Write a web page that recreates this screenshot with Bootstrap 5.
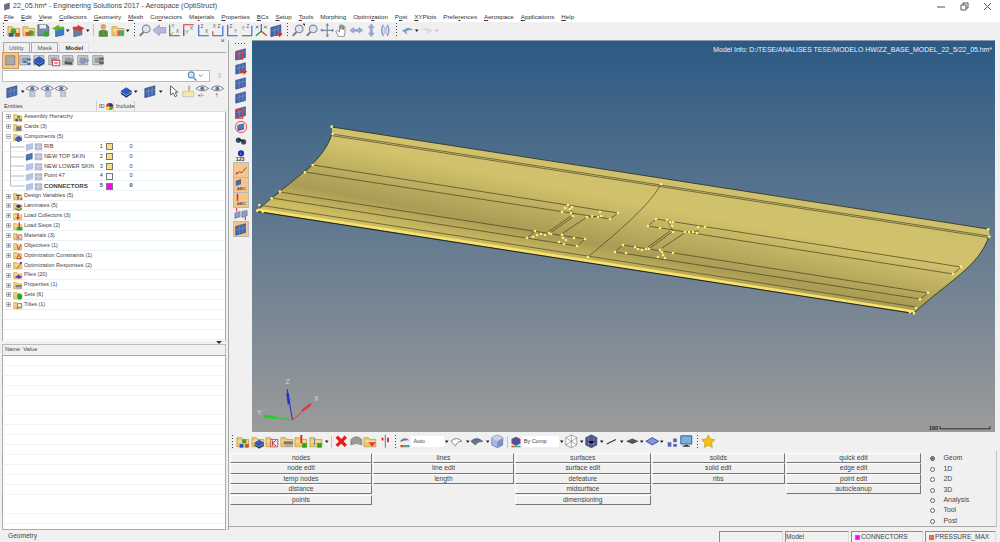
<!DOCTYPE html>
<html lang="en">
<head>
<meta charset="utf-8">
<title>22_05.hm* - Engineering Solutions 2017 - Aerospace (OptiStruct)</title>
<link href="https://cdn.jsdelivr.net/npm/bootstrap@5.3.0/dist/css/bootstrap.min.css" rel="stylesheet">
<style>
html,body{height:542px;overflow:hidden;background:#f0f0f0}
body{font-family:"Liberation Sans",Arial,sans-serif;font-size:6px;line-height:1;color:#444}
.app{height:542px;width:1000px}
.titlebar{height:12px;background:#fff;color:#444;font-size:7.05px;padding-left:3px}
.titlebar svg.doc{width:9px;height:9px;margin-right:1px}
.winbtns{margin-left:auto;gap:12px;padding-right:7px}
.winbtns svg{width:11px;height:9px}
.menubar{height:10px;background:#fff;padding-left:4px;gap:6.9px;font-size:6.25px;color:#333}
.toolbar{height:18px;background:#f0f0f0;padding-bottom:2px}
.ib{width:14.6px;height:14.6px;flex:none}
.ib12{width:12px;height:12px;flex:none}
.car{width:5.5px;height:5px;flex:none}
.grip{width:7px;height:14px;flex:none}
.sep{width:1px;height:12px;background:#c4c4c4;margin:0 2px;flex:none}
.mainrow{height:490px}
.leftpanel{width:227px;flex:none;padding:0 1px 0 2px}
.tabbar{height:13px;padding-left:1px;border-bottom:1px solid #a9a9a9}
.tabbar .nav-link{height:10px;padding:0 5px;margin:0 1.5px 0 0;border:1px solid #a9a9a9;border-bottom:0;border-radius:0;color:#555;font-size:6.1px;background:#f0f0f0;line-height:10px}
.tabbar .nav-link.active{font-weight:700;color:#333;background:#f0f0f0}
.closex{margin-left:auto;font-size:8px;margin-top:-3px;color:#555;padding-right:1px}
.iconrow{height:15px;padding-left:1px}
.iconrow .pick{background:#f7c489;outline:1px solid #c89a68}
.searchrow{height:13px;margin-top:1px}
.searchbox{width:208px;height:12px;padding:0;border:1px solid #bbb;border-radius:0;background:#fff;font-size:6px}
.searchrow .glass{margin-left:-24px}
.secondrow{height:17px;margin-top:1px;padding-left:3px}
.gapa{width:50px;flex:none}
.gapb{width:4px;flex:none}
.gapc{width:3px;flex:none}
.entityhead{height:11px;margin-top:1px;background:#f0f0f0;color:#444;font-size:5.7px;border-bottom:1px solid #ddd}
.hcell{height:11px;padding-left:2px;border-right:1px solid #d0d0d0;display:flex;align-items:center;flex:none}
.hc-a{width:95px}.hc-b{width:17px}.hc-c{width:21px}
.treewrap{height:229px;overflow:hidden;border-left:1px solid #aaa;border-right:1px solid #aaa;background:repeating-linear-gradient(#fff 0 9px,#e9f3f7 9px 9.9px)}
.treewrap .list-group-item{height:9.9px;padding:0;border:0;background:transparent;color:#444;font-size:5.5px;display:flex;align-items:center;border-radius:0}
.twist{width:5px;height:5px;margin:0 2px 0 3px;flex:none}
.ti{width:10px;height:10px;flex:none;margin-right:0}
.lab{margin-left:1px}
.indent{width:22px;height:10px;flex:none}
.pi{width:9px;height:9px;flex:none;margin-right:0}
.cname{width:50px;flex:none;margin-left:1px;white-space:nowrap;overflow:hidden;font-size:5.7px}
.strong-row .cname{font-size:6.2px}
.cid{width:9px;text-align:right;flex:none;font-size:5.7px}
.sw{width:7px;height:7px;margin-left:2.5px;border:1px solid #777;flex:none}
.sw-y{background:#f7de82}.sw-w{background:#f6f6f6}.sw-m{background:#f0f}
.cinc{margin-left:17px;flex:none;font-size:5.7px}
.strong-row{font-weight:700;color:#333}
.splitter{height:3px;position:relative}
.splitter i{position:absolute;right:4px;top:0;border:3px solid transparent;border-top:3px solid #333;border-bottom:0}
.namehead{height:11px;background:#f0f0f0;border:1px solid #bbb;border-bottom:0;padding-left:2px;color:#444;font-size:5.7px;gap:3px}
.proppane{height:175px;border:1px solid #aaa;background:repeating-linear-gradient(#fff 0 9px,#edf5f8 9px 9.9px)}
.rightcol{border-left:1px solid #a8a8a8;margin-left:1px;min-width:0}
.upper{height:392px}
.vtools{width:23px;flex:none;padding-top:1px;gap:.6px}
.vtools .act{background:#f7c489;outline:1px solid #b9b9b9}
.vtools .ib{width:14px;height:14px}
.vtools .topgrip{width:14px;height:5px}
.canvas3d{flex:1;position:relative;background:linear-gradient(#2c5a84 0%,#9b9b9b 100%);border-top:1px solid #8a9aa8}
.canvas3d svg{display:block;width:100%;height:100%}
.canvas3d text{font-family:"Liberation Sans",Arial,sans-serif}
.modelinfo{position:absolute;right:3px;top:6px;color:#eef;font-size:6.9px;white-space:nowrap}
.rstrip{width:5px;flex:none;background:#f0f0f0}
.lowertools{height:19px;padding-left:0;background:#f0f0f0}
.combo{height:11px;background:#fff;font-size:5.6px;color:#444;display:flex;align-items:center;padding-left:2px;flex:none}
.combo-a{width:33px}.combo-b{width:37px}
.pagewrap{height:76px;border-bottom:1px solid #a8a8a8;border-right:1px solid #c4c4c4;margin-right:3px;padding-left:1px}
.pagegrid{display:grid;grid-template-columns:143px 142px 136.5px 134.5px 136px;width:692px;margin-top:2px;grid-auto-flow:column;grid-template-rows:repeat(5,10.4px)}
.pb.btn{padding:0;height:10.2px;width:calc(100% - 1px);border:0;border-top:1px solid #fff;border-left:1px solid #fff;border-right:1px solid #777;border-bottom:1px solid #777;border-radius:0;background:#f0f0f0;color:#444;font-size:6.7px;line-height:8px;font-family:inherit;display:block}
.radios{padding-left:8px;padding-top:2.5px}
.radioline{height:10.45px;display:flex;align-items:center;font-size:6.9px;color:#444}
.radioline .form-check-input{width:5px;height:5px;margin:0 8.500px 0 0;border:1px solid #666;border-radius:50%;background-image:none;background-color:#fff;flex:none}
.radioline .form-check-input:checked{background:#222;box-shadow:inset 0 0 0 .5px #fff}
.statusbar{height:12px;background:#f0f0f0;font-size:6.6px;color:#444;padding-right:2px}
.stcell{height:11px;border:1px solid #8c8c8c;border-bottom:0;border-right-color:#ddd;display:flex;align-items:center;padding-left:0;flex:none;margin-right:2px;white-space:nowrap;margin-top:1px}
.st-a,.st-b{width:64px}.st-c{width:72px}.st-d{width:71px}
.ssw{width:5px;height:5px;margin:0 1px 0 3px;flex:none;border:1px solid #888}
.ssw-m{background:#f0f}.ssw-o{background:#f07030}
</style>
</head>
<body>
<svg width="0" height="0" class="d-none" aria-hidden="true">
<defs>
<symbol id="fold" viewBox="0 0 16 16"><path fill="#efc76c" stroke="#b58f3b" stroke-width=".7" d="M1 4h5l1.5 2H14v8H1z"/><path fill="#f9e09a" d="M2 7h11v2H2z"/></symbol>
<symbol id="plate" viewBox="0 0 16 16"><path fill="#4669ad" stroke="#2b3f78" stroke-width=".7" d="M2 5l11-3v10L2 15z"/><path stroke="#8fa4d4" stroke-width=".5" fill="none" d="M6 4v10M10 3v10M2 9l11-3"/></symbol>
<symbol id="platepale" viewBox="0 0 16 16"><path fill="#b4c6e6" stroke="#8ea5cd" stroke-width=".6" d="M2 5l12-3v10L2 15z"/></symbol>
<symbol id="gridpale" viewBox="0 0 16 16"><path fill="#b9bfd0" stroke="#8d93a8" stroke-width=".8" d="M2 3h12v11H2z"/><path stroke="#eef" stroke-width=".7" d="M8 3v11M2 8h12"/></symbol>
<symbol id="diamond" viewBox="0 0 16 16"><path fill="#2c59c7" stroke="#163a8a" stroke-width=".6" d="M8 4l6 4-6 4-6-4z"/><path fill="#163a8a" d="M2 9l6 4 6-4v2l-6 4-6-4z"/></symbol>
<symbol id="eye" viewBox="0 0 16 16"><path fill="#eef2f6" stroke="#667" stroke-width=".9" d="M1 5q7-6 14 0-7 5-14 0z"/><circle cx="8" cy="5" r="2.2" fill="#5a7ba8"/></symbol>
<symbol id="mag" viewBox="0 0 16 16"><circle cx="9" cy="6.5" r="4.2" fill="#dfe4ec" stroke="#858a96" stroke-width="1.2"/><path stroke="#777" stroke-width="2" d="M6 10l-4 4"/></symbol>
<symbol id="caret" viewBox="0 0 6 5"><path fill="#222" d="M1 1.5h4L3 4z"/></symbol>
<symbol id="caretg" viewBox="0 0 6 5"><path fill="#bbb" d="M1 1.5h4L3 4z"/></symbol>
<symbol id="gripv" viewBox="0 0 7 14"><path stroke="#444" stroke-dasharray="1 2" d="M3.5 0v14"/></symbol>
<symbol id="cube" viewBox="0 0 16 16"><path fill="#aab8e0" stroke="#5f6f9e" stroke-width=".8" d="M8 1l6 3v8l-6 3-6-3V4z"/><path fill="#7f90c7" d="M8 8l6-4v8l-6 3z"/><path fill="#c8d2ec" d="M8 1l6 3-6 4-6-4z"/></symbol>
<symbol id="box" viewBox="0 0 16 16"><rect x="2" y="3" width="11" height="10" fill="#cdcfd4" stroke="#888" stroke-width=".8"/><path fill="#989ca8" d="M4 5h7v6H4z"/></symbol>
<symbol id="plus" viewBox="0 0 5 5"><path fill="#fff" stroke="#888" stroke-width=".6" d="M.5.500h4v4h-4z"/><path stroke="#555" stroke-width=".6" d="M1 2.500h3M2.500 1v3"/></symbol>
<symbol id="minus" viewBox="0 0 5 5"><path fill="#fff" stroke="#888" stroke-width=".6" d="M.5.500h4v4h-4z"/><path stroke="#555" stroke-width=".6" d="M1 2.500h3"/></symbol>
<symbol id="branch" viewBox="0 0 22 10"><path stroke="#bbb" fill="none" d="M7.500 0v10M7.500 5h14"/></symbol>
<symbol id="branchend" viewBox="0 0 22 10"><path stroke="#bbb" fill="none" d="M7.500 0v5M7.500 5h14"/></symbol>
</defs>
</svg>
<div class="app d-flex flex-column">
  <div class="titlebar d-flex align-items-center">
    <svg class="doc" viewBox="0 0 16 16"><path fill="#6a6f86" d="M2 4l10-3v11L2 15z"/></svg>
    <span>22_05.hm* - Engineering Solutions 2017 - Aerospace (OptiStruct)</span>
    <div class="winbtns d-flex">
      <svg viewBox="0 0 11 9"><path stroke="#555" d="M1 5h8"/></svg>
      <svg viewBox="0 0 11 9"><path fill="none" stroke="#555" d="M2 3h5v5H2zM4 3V1h5v5H7"/></svg>
      <svg viewBox="0 0 11 9"><path stroke="#555" fill="none" d="M2 1l7 7M9 1L2 8"/></svg>
    </div>
  </div>
  <div class="menubar d-flex align-items-center">
    <span><u>F</u>ile</span><span><u>E</u>dit</span><span><u>V</u>iew</span><span><u>C</u>ollectors</span><span><u>G</u>eometry</span><span><u>M</u>esh</span><span>Co<u>n</u>nectors</span><span>Ma<u>t</u>erials</span><span><u>P</u>roperties</span><span><u>B</u>Cs</span><span><u>S</u>etup</span><span><u>T</u>ools</span><span>Morphing</span><span>Optimi<u>z</u>ation</span><span>P<u>o</u>st</span><span><u>X</u>YPlots</span><span>Prefe<u>r</u>ences</span><span><u>A</u>erospace</span><span><u>A</u>pplications</span><span><u>H</u>elp</span>
  </div>
  <div class="toolbar d-flex align-items-center">
    <svg class="grip"><use href="#gripv"/></svg>
    <svg class="ib" viewBox="0 0 16 16"><use href="#fold"/><circle cx="7" cy="9" r="3" fill="#3a3"/><path fill="#25c" d="M2 11h5v4H2z"/><path fill="#c52" d="M9 11h5v4H9z"/></svg>
    <svg class="ib" viewBox="0 0 16 16"><use href="#fold"/><circle cx="10" cy="11" r="3" fill="#4a3"/><path fill="#c52" d="M4 10h5v4H4z"/></svg>
    <svg class="ib" viewBox="0 0 16 16"><path fill="#7a8ea8" stroke="#445" stroke-width=".7" d="M2 2h10l2 2v10H2z"/><path fill="#eef" d="M4 2h7v4H4z"/><circle cx="11" cy="12" r="3" fill="#3a3"/></svg>
    <svg class="ib" viewBox="0 0 16 16"><path fill="#3d7dc9" stroke="#234" stroke-width=".5" d="M5 7l9-2v8l-9 2z"/><path fill="#5cb62c" d="M1 6l8-4v2h5v3H8v2z"/></svg>
    <svg class="car"><use href="#caret"/></svg>
    <svg class="ib" viewBox="0 0 16 16"><path fill="#6a7ea8" stroke="#234" stroke-width=".5" d="M3 7l9-2v8l-9 2z"/><path fill="#d8352a" d="M15 6L7 2v2H2v3h6v2z"/></svg>
    <svg class="car"><use href="#caret"/></svg>
    <span class="sep"></span>
    <svg class="ib" viewBox="0 0 16 16"><circle cx="8" cy="4" r="3" fill="#d9a26a"/><path fill="#3f9a3a" d="M3 15V9q5-3 10 0v6z"/><path fill="#a66" d="M7 8h2v7H7z"/></svg>
    <svg class="ib" viewBox="0 0 16 16"><use href="#fold"/><path fill="#f52" d="M7 8h3v6H7z"/><path fill="#39d" d="M10 8h2v6h-2z"/><path fill="#3b3" d="M12 8h2v6h-2z"/></svg>
    <svg class="car"><use href="#caret"/></svg>
    <svg class="grip"><use href="#gripv"/></svg>
    <svg class="ib" viewBox="0 0 16 16"><use href="#mag"/></svg>
    <svg class="ib" viewBox="0 0 16 16"><path fill="#b9b6e0" stroke="#8f8cc0" stroke-width=".7" d="M1 8l7-6v3h7v6H8v3z"/></svg>
    <svg class="ib" viewBox="0 0 16 16"><path fill="none" stroke="#1c8a2c" stroke-width="1.2" d="M3 2v12h11"/><path fill="none" stroke="#d33" stroke-width=".8" d="M3 14l4-4"/><text x="5" y="6" font-size="5" fill="#555">Y</text><text x="10" y="11" font-size="5" fill="#555">X</text></svg>
    <svg class="ib" viewBox="0 0 16 16"><path fill="none" stroke="#d33" stroke-width="1.2" d="M14 2H3v12"/><path stroke="#1c8a2c" stroke-width="1.2" d="M3 8v6"/><text x="5" y="12" font-size="5" fill="#555">Y</text><text x="10" y="8" font-size="5" fill="#555">X</text></svg>
    <svg class="ib" viewBox="0 0 16 16"><path fill="none" stroke="#2f5ed8" stroke-width="1.2" d="M3 2v12h11"/><text x="5" y="6" font-size="5" fill="#555">Z</text><text x="10" y="11" font-size="5" fill="#555">X</text></svg>
    <svg class="ib" viewBox="0 0 16 16"><path fill="none" stroke="#2f5ed8" stroke-width="1.2" d="M2 14h11V3"/><path stroke="#d33" stroke-width="1.2" d="M2 14V9"/><text x="7" y="6" font-size="5" fill="#555">Z</text><text x="2" y="6" font-size="5" fill="#555">X</text></svg>
    <svg class="ib" viewBox="0 0 16 16"><path fill="none" stroke="#2f5ed8" stroke-width="1.2" d="M3 2v12h11"/><text x="5" y="6" font-size="5" fill="#555">Z</text><text x="10" y="11" font-size="5" fill="#555">Y</text></svg>
    <svg class="ib" viewBox="0 0 16 16"><path fill="none" stroke="#1c8a2c" stroke-width="1.2" d="M2 14h11"/><path stroke="#2f5ed8" stroke-width="1.2" d="M13 14V3"/><text x="7" y="6" font-size="5" fill="#555">Z</text><text x="2" y="8" font-size="5" fill="#555">Y</text></svg>
    <svg class="ib" viewBox="0 0 16 16"><path stroke="#2f5ed8" stroke-width="1.3" d="M8 9V1"/><path stroke="#1c8a2c" stroke-width="1.3" d="M8 9l-6 5"/><path stroke="#d33" stroke-width="1.3" d="M8 9l6 5"/><path stroke="#333" stroke-width=".7" d="M2 3l3 3M5 3L2 6M11 3l3 3M14 3l-3 3"/></svg>
    <svg class="ib" viewBox="0 0 16 16"><use href="#plate"/><path fill="#d8352a" d="M15 12l-4-3v2H7v3h4v2z"/></svg>
    <svg class="grip"><use href="#gripv"/></svg>
    <svg class="ib" viewBox="0 0 16 16"><use href="#mag"/><path stroke="#333" stroke-width=".8" d="M13 1h2v2"/></svg>
    <svg class="ib" viewBox="0 0 16 16"><use href="#mag"/></svg>
    <svg class="ib" viewBox="0 0 16 16"><path stroke="#7b8aa8" stroke-width="1.3" d="M8 2v12M2 8h12"/><path fill="#7b8aa8" d="M8 0l2 3H6zM8 16l2-3H6zM0 8l3-2v4zM16 8l-3-2v4z"/></svg>
    <svg class="ib" viewBox="0 0 16 16"><path fill="#fff" stroke="#777" stroke-width=".9" d="M5 15l-3-6 2-1 2 2V3h1.500v4V2H9v5V3h1.500v4.500V4H12v7l-1 4z"/></svg>
    <svg class="ib" viewBox="0 0 16 16"><path fill="#9ab0dc" stroke="#7488b8" stroke-width=".6" d="M1 8l4-3v2h6V5l4 3-4 3V9H5v2z"/></svg>
    <svg class="ib" viewBox="0 0 16 16"><path fill="#9ab0dc" stroke="#7488b8" stroke-width=".6" d="M8 1l3 4H9v6h2l-3 4-3-4h2V5H5z"/></svg>
    <svg class="ib" viewBox="0 0 16 16"><path fill="none" stroke="#7e94c4" stroke-width="1.6" d="M6 2Q2 8 6 14M10 2q4 6 0 12"/><path fill="#bcc8e4" d="M6 4h4v8H6z"/></svg>
    <svg class="grip"><use href="#gripv"/></svg>
    <svg class="ib" viewBox="0 0 16 16"><path fill="#7e9cc8" d="M2 8l3-1q4-4 10 1-4-1-8 1l1 4z"/></svg>
    <svg class="car"><use href="#caret"/></svg>
    <svg class="ib" viewBox="0 0 16 16"><path fill="#d8d8d8" d="M14 8l-3-1Q7 3 1 8q4-1 8 1l-1 4z"/></svg>
    <svg class="car"><use href="#caretg"/></svg>
  </div>
  <div class="mainrow d-flex">
    <div class="leftpanel d-flex flex-column">
      <div class="tabbar d-flex align-items-end">
        <ul class="nav nav-tabs border-0 flex-nowrap">
          <li class="nav-item"><a class="nav-link" href="#">Utility</a></li>
          <li class="nav-item"><a class="nav-link" href="#">Mask</a></li>
          <li class="nav-item"><a class="nav-link active" href="#">Model</a></li>
        </ul>
        <span class="closex align-self-start">×</span>
      </div>
      <div class="iconrow d-flex align-items-center">
        <svg class="ib pick" viewBox="0 0 16 16"><path fill="#aaa" stroke="#666" stroke-width=".6" d="M3 3h10v10H3z"/></svg>
        <svg class="ib" viewBox="0 0 16 16"><use href="#box"/><path fill="#2f6fd0" d="M6 9h3v2H6zM10 6h4v2h-4zM10 11h4v2h-4z"/></svg>
        <svg class="ib" viewBox="0 0 16 16"><use href="#box"/><use href="#diamond"/></svg>
        <svg class="ib" viewBox="0 0 16 16"><use href="#box"/><path fill="#f4f4f4" stroke="#c33" d="M6 8h8v6H6z"/><path stroke="#c33" d="M8 11h4"/></svg>
        <svg class="ib" viewBox="0 0 16 16"><use href="#box"/><path fill="#555" d="M4 9l8 1v3l-8-1z"/><path fill="#999" d="M7 6h7v4H7z"/></svg>
        <svg class="ib" viewBox="0 0 16 16"><use href="#box"/><path fill="#8c94c0" d="M3 10l8-4 4 2-8 5z"/></svg>
        <svg class="ib" viewBox="0 0 16 16"><use href="#box"/><path fill="#666" d="M9 5h5v3H9zM9 9h5v3H9z"/></svg>
      </div>
      <div class="searchrow d-flex align-items-center">
        <input class="form-control searchbox" type="text" aria-label="Search">
        <svg class="ib12 glass" viewBox="0 0 16 16"><circle cx="7" cy="6.500" r="4" fill="#cfe6fa" stroke="#5a8fc0" stroke-width="1.400"/><path stroke="#888" stroke-width="2" d="M10 10l4 4"/></svg>
        <svg class="car" viewBox="0 0 6 5"><path fill="none" stroke="#555" stroke-width=".8" d="M1 1.500l2 2 2-2"/></svg>
        <svg class="car ms-auto me-1" viewBox="0 0 6 8"><path fill="none" stroke="#555" stroke-width=".8" d="M1 1l2 2 2-2M1 5l2 2 2-2"/></svg>
      </div>
      <div class="secondrow d-flex align-items-center">
        <svg class="ib" viewBox="0 0 16 16"><use href="#plate"/></svg>
        <svg class="car"><use href="#caret"/></svg>
        <svg class="ib" viewBox="0 0 16 16"><use href="#eye"/><use href="#gridpale" x="4" y="7" width="8" height="8"/></svg>
        <svg class="ib" viewBox="0 0 16 16"><use href="#eye"/><use href="#gridpale" x="5" y="7" width="8" height="8"/></svg>
        <svg class="ib" viewBox="0 0 16 16"><use href="#eye"/><use href="#gridpale" x="6" y="7" width="8" height="8"/></svg>
        <span class="gapa"></span>
        <svg class="ib" viewBox="0 0 16 16"><use href="#diamond"/></svg>
        <svg class="car"><use href="#caret"/></svg>
        <span class="gapb"></span>
        <svg class="ib" viewBox="0 0 16 16"><use href="#plate"/></svg>
        <svg class="car"><use href="#caret"/></svg>
        <span class="gapc"></span>
        <svg class="ib" viewBox="0 0 16 16"><path fill="#fff" stroke="#555" stroke-width="1" d="M5 2v10l3-2 2 4 2-1-2-4h3z"/></svg>
        <svg class="ib" viewBox="0 0 16 16"><path fill="#f4ec9a" stroke="#9bc" stroke-width=".7" d="M2 8h12v6H2z"/><path fill="#e88" d="M8 2h2v5H8z"/></svg>
        <svg class="ib" viewBox="0 0 16 16"><use href="#eye"/><text x="3" y="14" font-size="5" fill="#333">+/−</text></svg>
        <svg class="ib" viewBox="0 0 16 16"><use href="#eye"/><text x="6" y="14" font-size="5" fill="#333">†</text></svg>
      </div>
      <div class="entityhead d-flex">
        <div class="hcell hc-a">Entities</div>
        <div class="hcell hc-b">ID<svg class="ms-auto" width="7" height="7" viewBox="0 0 8 8"><circle cx="4" cy="4" r="4" fill="#e22"/><path fill="#22d" d="M4 4V0a4 4 0 0 1 4 4z"/><path fill="#2b2" d="M4 4h4a4 4 0 0 1-4 4z"/><path fill="#ee2" d="M4 4v4a4 4 0 0 1-4-4z"/></svg></div>
        <div class="hcell hc-c">Include</div>
      </div>
      <div class="treewrap">
        <ul class="list-group list-group-flush">
          <li class="list-group-item"><svg class="twist"><use href="#plus"/></svg><svg class="ti" viewBox="0 0 16 16"><use href="#fold"/><circle cx="9" cy="8" r="2.500" fill="#3a3"/><path fill="#25c" d="M4 11h4v4H4z"/><path fill="#c52" d="M10 11h4v4h-4z"/></svg><span class="lab">Assembly Hierarchy</span></li>
          <li class="list-group-item"><svg class="twist"><use href="#plus"/></svg><svg class="ti" viewBox="0 0 16 16"><use href="#fold"/><path fill="#777" d="M5 7h8v7H5z"/></svg><span class="lab">Cards (3)</span></li>
          <li class="list-group-item"><svg class="twist"><use href="#minus"/></svg><svg class="ti" viewBox="0 0 16 16"><use href="#fold"/><use href="#diamond" x="2" y="3" width="14" height="14"/></svg><span class="lab">Components (5)</span></li>
          <li class="list-group-item"><svg class="indent"><use href="#branch"/></svg><svg class="pi" viewBox="0 0 16 16"><use href="#platepale"/></svg><svg class="pi" viewBox="0 0 16 16"><use href="#gridpale"/></svg><span class="cname">RIB</span><span class="cid">1</span><span class="sw sw-y"></span><span class="cinc">0</span></li>
          <li class="list-group-item"><svg class="indent"><use href="#branch"/></svg><svg class="pi" viewBox="0 0 16 16"><use href="#plate"/></svg><svg class="pi" viewBox="0 0 16 16"><use href="#gridpale"/></svg><span class="cname">NEW TOP SKIN</span><span class="cid">2</span><span class="sw sw-y"></span><span class="cinc">0</span></li>
          <li class="list-group-item"><svg class="indent"><use href="#branch"/></svg><svg class="pi" viewBox="0 0 16 16"><use href="#platepale"/></svg><svg class="pi" viewBox="0 0 16 16"><use href="#gridpale"/></svg><span class="cname">NEW LOWER SKIN</span><span class="cid">3</span><span class="sw sw-y"></span><span class="cinc">0</span></li>
          <li class="list-group-item"><svg class="indent"><use href="#branch"/></svg><svg class="pi" viewBox="0 0 16 16"><use href="#platepale"/></svg><svg class="pi" viewBox="0 0 16 16"><use href="#gridpale"/></svg><span class="cname">Point 47</span><span class="cid">4</span><span class="sw sw-w"></span><span class="cinc">0</span></li>
          <li class="list-group-item strong-row"><svg class="indent"><use href="#branchend"/></svg><svg class="pi" viewBox="0 0 16 16"><use href="#platepale"/></svg><svg class="pi" viewBox="0 0 16 16"><use href="#gridpale"/></svg><span class="cname">CONNECTORS</span><span class="cid">5</span><span class="sw sw-m"></span><span class="cinc">0</span></li>
          <li class="list-group-item"><svg class="twist"><use href="#plus"/></svg><svg class="ti" viewBox="0 0 16 16"><use href="#fold"/><path stroke="#23c" stroke-width="1.600" d="M5 7h7M8 7v7"/><path fill="#d33" d="M12 11h3v3h-3z"/></svg><span class="lab">Design Variables (5)</span></li>
          <li class="list-group-item"><svg class="twist"><use href="#plus"/></svg><svg class="ti" viewBox="0 0 16 16"><use href="#fold"/><path fill="#3f3a6a" d="M4 8l5-3 5 3-5 4z"/><path fill="#383" d="M4 11l5 3 5-3v2l-5 3-5-3z"/></svg><span class="lab">Laminates (5)</span></li>
          <li class="list-group-item"><svg class="twist"><use href="#plus"/></svg><svg class="ti" viewBox="0 0 16 16"><use href="#fold"/><path stroke="#d22" stroke-width="2" d="M8 3v9"/><path fill="#d22" d="M5 10h6l-3 4z"/></svg><span class="lab">Load Collectors (3)</span></li>
          <li class="list-group-item"><svg class="twist"><use href="#plus"/></svg><svg class="ti" viewBox="0 0 16 16"><use href="#fold"/><path fill="#2a2" d="M6 10h9v5H6z"/><path stroke="#d22" stroke-width="2" d="M10 2v9"/></svg><span class="lab">Load Steps (2)</span></li>
          <li class="list-group-item"><svg class="twist"><use href="#plus"/></svg><svg class="ti" viewBox="0 0 16 16"><use href="#fold"/><path fill="#eee" stroke="#a44" stroke-width=".8" d="M6 6h8v8H6z"/><path stroke="#a22" d="M8 7v6M8 10l4-3M8 10l4 3"/></svg><span class="lab">Materials (3)</span></li>
          <li class="list-group-item"><svg class="twist"><use href="#plus"/></svg><svg class="ti" viewBox="0 0 16 16"><use href="#fold"/><path fill="none" stroke="#c22" stroke-width="1.300" d="M6 6l3 8 4-9"/></svg><span class="lab">Objectives (1)</span></li>
          <li class="list-group-item"><svg class="twist"><use href="#plus"/></svg><svg class="ti" viewBox="0 0 16 16"><use href="#fold"/><path fill="none" stroke="#c22" stroke-width="1.200" d="M6 14l3-8 4 8z"/></svg><span class="lab">Optimization Constraints (1)</span></li>
          <li class="list-group-item"><svg class="twist"><use href="#plus"/></svg><svg class="ti" viewBox="0 0 16 16"><use href="#fold"/><path stroke="#c22" stroke-width="1.200" d="M6 14l7-9"/><path fill="#23a" d="M11 3h3v3h-3z"/></svg><span class="lab">Optimization Responses (2)</span></li>
          <li class="list-group-item"><svg class="twist"><use href="#plus"/></svg><svg class="ti" viewBox="0 0 16 16"><use href="#fold"/><path fill="#6a3fb0" d="M3 11l6-4 6 4-6 3z"/></svg><span class="lab">Plies (20)</span></li>
          <li class="list-group-item"><svg class="twist"><use href="#plus"/></svg><svg class="ti" viewBox="0 0 16 16"><use href="#fold"/><path fill="#777" d="M4 8h10v3H4z"/><path fill="#aaa" d="M5 11h9v3H5z"/></svg><span class="lab">Properties (1)</span></li>
          <li class="list-group-item"><svg class="twist"><use href="#plus"/></svg><svg class="ti" viewBox="0 0 16 16"><use href="#fold"/><path fill="#1ea82a" d="M6 8l4-3 5 4-2 6H8z"/></svg><span class="lab">Sets (6)</span></li>
          <li class="list-group-item"><svg class="twist"><use href="#plus"/></svg><svg class="ti" viewBox="0 0 16 16"><use href="#fold"/><path fill="#fff" stroke="#333" stroke-width=".9" d="M7 6h7v5H9l-2 3z"/></svg><span class="lab">Titles (1)</span></li>
        </ul>
      </div>
      <div class="splitter"><i></i></div>
      <div class="namehead d-flex align-items-center"><span>Name</span><span>Value</span></div>
      <div class="proppane"></div>
    </div>
    <div class="rightcol flex-fill d-flex flex-column">
      <div class="upper d-flex">
        <div class="vtools d-flex flex-column align-items-center">
          <svg class="topgrip" viewBox="0 0 14 5"><path stroke="#444" stroke-dasharray="1 2" d="M1 2.500h12"/></svg>
          <svg class="ib" viewBox="0 0 16 16"><use href="#plate"/><path fill="none" stroke="#e33" stroke-width="1.300" d="M2 6h8v8H2z"/></svg>
          <svg class="ib" viewBox="0 0 16 16"><use href="#plate"/><path fill="#d8352a" d="M15 12l-4-3v2H7v3h4v2z"/></svg>
          <svg class="ib" viewBox="0 0 16 16"><use href="#plate"/></svg>
          <svg class="ib" viewBox="0 0 16 16"><use href="#plate"/></svg>
          <svg class="ib" viewBox="0 0 16 16"><use href="#plate"/><path fill="none" stroke="#e33" stroke-width="1.300" d="M2 6h8v9H2z"/></svg>
          <svg class="ib" viewBox="0 0 16 16"><circle cx="8" cy="8" r="6.500" fill="#f3e4e4" stroke="#e44"/><use href="#plate" x="3" y="3" width="10" height="10"/></svg>
          <svg class="ib" viewBox="0 0 16 16"><circle cx="5" cy="7" r="3" fill="#35506e"/><circle cx="11" cy="9" r="3" fill="#35506e"/><path stroke="#222" stroke-width="2" d="M5 6l6 2"/></svg>
          <svg class="ib" viewBox="0 0 16 16"><circle cx="8" cy="5" r="3.500" fill="#1b2fb0"/><text x="7.200" y="7" font-size="5" fill="#fff">i</text><text x="2" y="14" font-size="6" font-weight="700" fill="#333">123</text></svg>
          <svg class="ib act" viewBox="0 0 16 16"><path fill="none" stroke="#445" stroke-width=".9" d="M2 13l4-3 3 1 5-6"/><path fill="#d33" d="M2 13l1-3 2 2z"/></svg>
          <svg class="ib act" viewBox="0 0 16 16"><path fill="#4a69ad" d="M2 3l6-2v6L2 9z"/><text x="3" y="14" font-size="5" font-weight="700" fill="#555">ABC</text></svg>
          <svg class="ib act" viewBox="0 0 16 16"><path stroke="#d22" stroke-width="1.600" d="M4 1v8"/><text x="3" y="14" font-size="5" font-weight="700" fill="#555">ABC</text></svg>
          <svg class="ib" viewBox="0 0 16 16"><path fill="#8ea0c8" stroke="#445" stroke-width=".5" d="M1 7l6-2v6l-6 2zM9 5l6-1v6l-6 2z"/><path stroke="#d22" stroke-width="1.200" d="M3 1v4M13 11v4"/></svg>
          <svg class="ib act" viewBox="0 0 16 16"><use href="#plate"/></svg>
        </div>
        <div class="canvas3d">
          <svg viewBox="252 41 743 391" preserveAspectRatio="none" role="img" aria-label="Geometry view">
            <defs>
              <linearGradient id="skin" gradientUnits="userSpaceOnUse" x1="640" y1="172" x2="620" y2="272">
                <stop offset="0" stop-color="#cfc06c"/><stop offset=".3" stop-color="#d2c26c"/><stop offset=".78" stop-color="#a99c54"/><stop offset="1" stop-color="#cdbc62"/>
              </linearGradient>
            </defs>
            <path fill="url(#skin)" d="M332 127L988 229Q990 232 989 236C979 267 947 282 914 313L257 211C290 180 322 165 332 134Z"/>
            <path fill="none" stroke="#2a2a20" stroke-width=".8" d="M332 127L988 229M989 236C979 267 947 282 914 313M257 211C290 180 322 165 332 134"/>
            <path stroke="#f7e26c" stroke-width="2.600" d="M258 209.500L914 311.500"/>
            <path stroke="#1a1a10" stroke-width=".9" d="M257 211.500L914 313.500"/>
            <path fill="none" stroke="#5c5430" stroke-width=".8" d="M259 205L916 307M332 134L989 236M332 135.600L989 237.600"/>
            <path fill="none" stroke="#4e4828" stroke-width=".75" d="M313 165L618 213M305 172L610 219M280 192L585 239M272 198L577 246M656 219L961 267M648 226L953 274M623 245L928 293M615 252L920 299M313 165L305 172M280 192L272 198M618 213L610 219M585 239L577 246M656 219L648 226M623 245L615 252M961 267L953 274M928 293L920 299"/>
            <path fill="none" stroke="#4e4828" stroke-width=".75" d="M661 184C650 205 620 230 588 257"/>
            <path fill="none" stroke="#4e4828" stroke-width=".75" d="M573 217L550 233M571 216L548 232M587 217L563 233M587 217L600 216M568 205L574 216M535 231L527 238M672 232L650 248M670 231L648 247M686 232L662 248M686 232L699 231M667 220L673 231"/>
            <path fill="none" stroke="#f8f07a" stroke-width="2.700" stroke-linecap="round" d="M331.700 126.700h0M332.700 134h0M312.700 165h0M305 172.300h0M280 191.700h0M271.700 198.300h0M259.300 205h0M257.300 210.700h0M262.700 211.700h0M988.300 229.300h0M989.300 236.700h0M961 266.700h0M953 274h0M928 292.700h0M920 299.300h0M916 308h0M910 312.300h0M914 313.300h0M661 184h0M588 257h0M568 205h0M565 208h0M570 209h0M572 207h0M562 212h0M571 213h0M573 216h0M600 212h0M601 216h0M618 213h0M610 219h0M598 217h0M592 216h0M587 217h0M535 231h0M527 238h0M533 237h0M537 235h0M541 234h0M545 235h0M549 233h0M551 234h0M562 235h0M559 242h0M563 238h0M566 240h0M564 244h0M574 238h0M585 239h0M577 246h0M656 219h0M648 226h0M667 220h0M670 222h0M673 222h0M672 226h0M673 232h0M660 228h0M705 227h0M698 227h0M697 233h0M693 232h0M689 232h0M685 232h0M623 245h0M615 252h0M626 253h0M635 247h0M638 249h0M642 250h0M646 249h0M649 249h0M660 250h0M658 257h0M663 255h0M665 258h0M662 252h0M673 253h0"/>
            <path stroke="#2333d0" stroke-width="1.100" d="M292.500 420L287 389"/><path stroke="#2333d0" stroke-width="2.600" d="M287.500 393L289 404"/>
            <path stroke="#1fd01f" stroke-width="1" d="M292.500 420L263 416"/><path stroke="#1fd01f" stroke-width="2.800" d="M264 416L275 417.500"/>
            <path stroke="#d84040" stroke-width="1" d="M292.500 420L311 404"/><path stroke="#d84040" stroke-width="2.800" d="M302 411L311 404"/>
            <text x="285.500" y="384" font-size="7" fill="#d8d8d8">Z</text><text x="257" y="415" font-size="7" fill="#d8d8d8">Y</text><text x="314" y="401" font-size="7" fill="#d8d8d8">X</text>
            <text x="929" y="430" font-size="5.500" font-weight="700" fill="#222">100</text>
            <path fill="none" stroke="#111" stroke-width=".8" d="M940 426v2.800h50V426"/>
          </svg>
          <span class="modelinfo">Model Info: D:/TESE/ANALISES TESE/MODELO HW/ZZ_BASE_MODEL_22_5/22_05.hm*</span>
        </div>
        <div class="rstrip"></div>
      </div>
      <div class="lowertools d-flex align-items-center">
        <svg class="grip"><use href="#gripv"/></svg>
        <svg class="ib" viewBox="0 0 16 16"><use href="#fold"/><circle cx="9" cy="8" r="2.500" fill="#3a3"/><path fill="#25c" d="M4 11h4v4H4z"/><path fill="#c52" d="M10 11h4v4h-4z"/></svg>
        <svg class="ib" viewBox="0 0 16 16"><use href="#fold"/><use href="#diamond" x="2" y="3" width="14" height="14"/></svg>
        <svg class="ib" viewBox="0 0 16 16"><use href="#fold"/><path fill="#eee" stroke="#a44" stroke-width=".8" d="M6 6h8v8H6z"/><path stroke="#a22" d="M8 7v6M8 10l4-3M8 10l4 3"/></svg>
        <svg class="ib" viewBox="0 0 16 16"><use href="#fold"/><path fill="#777" d="M4 8h10v3H4z"/><path fill="#aaa" d="M5 11h9v3H5z"/></svg>
        <svg class="ib" viewBox="0 0 16 16"><use href="#fold"/><path stroke="#d22" stroke-width="2" d="M8 1v9"/><path fill="#2a2" d="M9 10h5v5H9z"/></svg>
        <svg class="ib" viewBox="0 0 16 16"><use href="#fold"/><path fill="none" stroke="#38c" d="M6 12V5"/><path fill="#2a2" d="M9 10h5v5H9z"/></svg>
        <svg class="car"><use href="#caret"/></svg>
        <span class="sep"></span>
        <svg class="ib" viewBox="0 0 16 16"><path stroke="#e02020" stroke-width="3.600" d="M3 3l10 10M13 3L3 13"/></svg>
        <svg class="ib" viewBox="0 0 16 16"><path fill="#999" stroke="#666" stroke-width=".6" d="M2 6q6-6 12 0v6q-6-3-12 0z"/></svg>
        <svg class="ib" viewBox="0 0 16 16"><use href="#fold"/><path fill="#e33" d="M6 9l8 0-4 5z"/></svg>
        <svg class="ib" viewBox="0 0 16 16"><path stroke="#666" d="M8 1v14"/><path stroke="#d22" stroke-width="2" d="M11 4v5M5 4v3"/></svg>
        <svg class="grip"><use href="#gripv"/></svg>
        <svg class="ib12" viewBox="0 0 16 16"><path fill="#6a7a9a" d="M2 6q6-6 12 0-6-1-12 2z"/><path fill="#e33" d="M2 12h4v3H2z"/><path fill="#3b3" d="M6 12h4v3H6z"/><path fill="#39d" d="M10 12h4v3h-4z"/></svg>
        <div class="combo combo-a">Auto</div>
        <svg class="car"><use href="#caret"/></svg>
        <svg class="ib" viewBox="0 0 16 16"><path fill="#fff" stroke="#777" d="M1 8q6-6 12 0-5 0-7 5z"/></svg>
        <svg class="car"><use href="#caret"/></svg>
        <svg class="ib" viewBox="0 0 16 16"><path fill="#60748e" stroke="#334" stroke-width=".6" d="M1 8q6-6 13 0-6 0-8 4z"/></svg>
        <svg class="car"><use href="#caret"/></svg>
        <svg class="ib" viewBox="0 0 16 16"><use href="#cube"/></svg>
        <span class="sep"></span>
        <svg class="ib12" viewBox="0 0 16 16"><path fill="#5a4f8e" d="M8 1l6 3v6l-6 3-6-3V4z"/><path fill="#e33" d="M2 13h4v2H2z"/><path fill="#3b3" d="M6 13h4v2H6z"/><path fill="#39d" d="M10 13h4v2h-4z"/></svg>
        <div class="combo combo-b">By Comp</div>
        <svg class="car"><use href="#caret"/></svg>
        <svg class="ib" viewBox="0 0 16 16"><path fill="#fff" stroke="#777" stroke-width=".7" d="M8 1l6 3v8l-6 3-6-3V4zM8 1v14M2 4l12 8M14 4L2 12"/></svg>
        <svg class="car"><use href="#caret"/></svg>
        <svg class="ib" viewBox="0 0 16 16"><path fill="#4d5a96" stroke="#223" stroke-width=".7" d="M8 1l6 3v8l-6 3-6-3V4z"/><path stroke="#9aa6d8" stroke-width=".5" d="M5 3v11M11 3v11M2 8l6 3 6-3"/></svg>
        <svg class="car"><use href="#caret"/></svg>
        <svg class="ib" viewBox="0 0 16 16"><path stroke="#333" stroke-width="1.200" d="M3 11l10-5"/></svg>
        <svg class="car"><use href="#caret"/></svg>
        <svg class="ib" viewBox="0 0 16 16"><path fill="#555" d="M1 8l7-3 7 3-7 3z"/></svg>
        <svg class="car"><use href="#caret"/></svg>
        <svg class="ib" viewBox="0 0 16 16"><path fill="#8795d8" stroke="#2c4aa8" d="M1 8l7-4 7 4-7 4z"/></svg>
        <svg class="car"><use href="#caret"/></svg>
        <svg class="ib" viewBox="0 0 16 16"><path fill="#5a68b0" d="M3 9h4v5H3zM9 5h4v4H9zM9 11h4v3H9z"/></svg>
        <svg class="ib" viewBox="0 0 16 16"><path fill="#7ab0dc" stroke="#2b5a8a" d="M2 2h12v9H2z"/><path fill="#333" d="M6 12h4v1h2v1H4v-1h2z"/></svg>
        <svg class="grip"><use href="#gripv"/></svg>
        <svg class="ib" viewBox="0 0 16 16"><path fill="#f4c20d" stroke="#b88a10" stroke-width=".6" d="M8 1l2.200 4.600 5 .7-3.600 3.500.9 5L8 12.400l-4.500 2.400.9-5L.8 6.300l5-.7z"/></svg>
      </div>
      <div class="pagewrap d-flex">
        <div class="pagegrid">
          <button class="pb btn" type="button">nodes</button><button class="pb btn" type="button">node edit</button><button class="pb btn" type="button">temp nodes</button><button class="pb btn" type="button">distance</button><button class="pb btn" type="button">points</button>
          <button class="pb btn" type="button">lines</button><button class="pb btn" type="button">line edit</button><button class="pb btn" type="button">length</button><span></span><span></span>
          <button class="pb btn" type="button">surfaces</button><button class="pb btn" type="button">surface edit</button><button class="pb btn" type="button">defeature</button><button class="pb btn" type="button">midsurface</button><button class="pb btn" type="button">dimensioning</button>
          <button class="pb btn" type="button">solids</button><button class="pb btn" type="button">solid edit</button><button class="pb btn" type="button">ribs</button><span></span><span></span>
          <button class="pb btn" type="button">quick edit</button><button class="pb btn" type="button">edge edit</button><button class="pb btn" type="button">point edit</button><button class="pb btn" type="button">autocleanup</button><span></span>
        </div>
        <div class="radios">
          <label class="radioline"><input class="form-check-input" type="radio" name="pg" checked>Geom</label>
          <label class="radioline"><input class="form-check-input" type="radio" name="pg">1D</label>
          <label class="radioline"><input class="form-check-input" type="radio" name="pg">2D</label>
          <label class="radioline"><input class="form-check-input" type="radio" name="pg">3D</label>
          <label class="radioline"><input class="form-check-input" type="radio" name="pg">Analysis</label>
          <label class="radioline"><input class="form-check-input" type="radio" name="pg">Tool</label>
          <label class="radioline"><input class="form-check-input" type="radio" name="pg">Post</label>
        </div>
      </div>
    </div>
  </div>
  <div class="statusbar d-flex align-items-center">
    <span class="ps-2 me-auto">Geometry</span>
    <div class="stcell st-a"></div>
    <div class="stcell st-b">Model</div>
    <div class="stcell st-c"><span class="ssw ssw-m"></span>CONNECTORS</div>
    <div class="stcell st-d"><span class="ssw ssw-o"></span>PRESSURE_MAX</div>
  </div>
</div>
<script src="https://cdn.jsdelivr.net/npm/bootstrap@5.3.0/dist/js/bootstrap.bundle.min.js"></script>
</body>
</html>
